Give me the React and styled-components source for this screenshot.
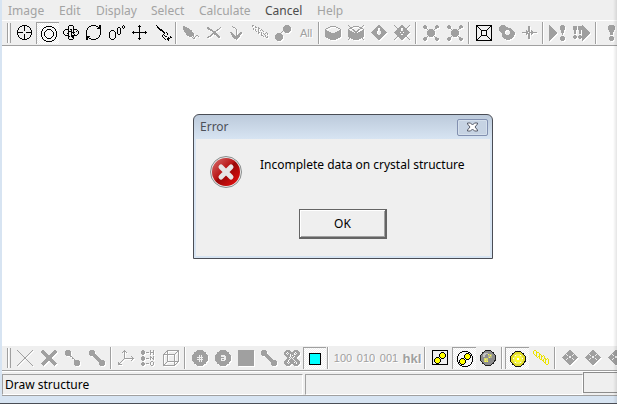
import React, { useState } from "react";
import styled, { createGlobalStyle, css } from "styled-components";

const GlobalStyle = createGlobalStyle`
  body {
    margin: 0;
    background-color: #d7e4f2;
    font-family: "Noto Sans", "Open Sans", sans-serif;
  }
`;

const menus = [
  { label: "Image", width: 51 },
  { label: "Edit", width: 37 },
  { label: "Display", width: 55 },
  { label: "Select", width: 48 },
  { label: "Calculate", width: 66 },
  { label: "Cancel", width: 52, active: true },
  { label: "Help", width: 40 },
];

// one "#" is one pixel of the toolbar glyph
function Pixels({ rows, x = 1, y = 1, fill = "currentColor" }) {
  let d = "";
  rows.forEach((row, j) => {
    for (const run of row.matchAll(/#+/g)) {
      d += `M${x + run.index} ${y + j}h${run[0].length}v1h-${run[0].length}z`;
    }
  });
  return <path d={d} fill={fill} />;
}

const diamond = [
  ".......##.......",
  "......####......",
  ".....######.....",
  "....########....",
  "...##########...",
  "..############..",
  ".##############.",
  "################",
  ".##############.",
  "..############..",
  "...##########...",
  "....########....",
  ".....######.....",
  "......####......",
  ".......##.......",
];

const gem = [
  ".......##.......",
  "......####......",
  ".....######.....",
  "....###..###....",
  "...####..####...",
  "..#####..#####..",
  ".#####....#####.",
  "######....######",
  ".#####....#####.",
  "..#####..#####..",
  "...##########...",
  "....########....",
  ".....######.....",
  "......####......",
  ".......##.......",
];

const bowl = [
  ".....######.....",
  "...##......##...",
  ".##..........##.",
  "#..............#",
  "##............##",
  "####........####",
  "######....######",
  "################",
  "################",
  "################",
  "################",
  ".##############.",
  "...##########...",
  ".....######.....",
];

const bang = ["####", "####", "####", "####", ".##.", ".##.", ".##.", ".##.", "....", ".##.", "####", "####", ".##."];

const ball = ["..###..", ".#####.", "#######", "#######", "#######", ".#####.", "..###.."];
const ballFill = ["..###..", ".#####.", ".#####.", ".#####.", "..###.."];

function YellowPair() {
  return (
    <g>
      <Pixels rows={ball} x={3} y={8} fill="#000" />
      <Pixels rows={ball} x={8} y={3} fill="#000" />
      <Pixels rows={ballFill} x={3} y={9} fill="#ffff00" />
      <Pixels rows={ballFill} x={8} y={4} fill="#ffff00" />
    </g>
  );
}

const icons = {
  target: (
    <Pixels
      rows={[
        ".....#####.....",
        "...##..#..##...",
        "..#....#....#..",
        ".#.....#.....#.",
        ".#.....#.....#.",
        "#......#......#",
        "#.............#",
        "######...######",
        "#.............#",
        "#......#......#",
        ".#.....#.....#.",
        ".#.....#.....#.",
        "..#....#....#..",
        "...##..#..##...",
        ".....#####.....",
      ]}
    />
  ),
  rings: (
    <Pixels
      rows={[
        ".....######.....",
        "...##......##...",
        "..#..........#..",
        ".#....####....#.",
        ".#...#....#...#.",
        "#...#......#...#",
        "#..#........#..#",
        "#..#........#..#",
        "#..#........#..#",
        "#..#........#..#",
        "#...#......#...#",
        ".#...#....#...#.",
        ".#....####....#.",
        "..#..........#..",
        "...##......##...",
        ".....######.....",
      ]}
    />
  ),
  cluster: (
    <Pixels
      rows={[
        "......####......",
        ".....#....#.....",
        ".....#....#.....",
        ".....#....#.....",
        "..####.##.####..",
        ".#...#..#.#...#.",
        "#....####.#..#.#",
        "#....#..####...#",
        "#...##..#.#....#",
        ".#...#..#..#..#.",
        "..####..######..",
        ".....##.###.....",
        ".....#...##.....",
        ".....#....#.....",
        "......####......",
      ]}
    />
  ),
  rotate: (
    <Pixels
      rows={[
        ".....#####...##",
        "...##.....##.##",
        "..#.........###",
        ".#.........####",
        ".#............#",
        "#.............#",
        "#.............#",
        "#.............#",
        "#.............#",
        "#.............#",
        "#............#.",
        "####.........#.",
        "###.........#..",
        "##.##.....##...",
        "##...#####.....",
      ]}
    />
  ),
  zoomAtoms: (
    <Pixels
      rows={[
        "..............#.",
        ".............#.#",
        ".........##..#.#",
        "........#..#..#.",
        "........#..#....",
        "..###...#..#....",
        ".#...#..#..#....",
        "#.....#.#..#....",
        "#.....#.#..#....",
        "#.....#..##.....",
        "#.....#.........",
        "#.....#.........",
        "#.....#.........",
        ".#...#..........",
        "..###...........",
      ]}
    />
  ),
  move: (
    <Pixels
      rows={[
        ".......#.......",
        "......###......",
        ".......#.......",
        ".......#.......",
        ".......#.......",
        ".......#.......",
        ".#.....#.....#.",
        "###############",
        ".#.....#.....#.",
        ".......#.......",
        ".......#.......",
        ".......#.......",
        ".......#.......",
        "......###......",
        ".......#.......",
      ]}
    />
  ),
  probe: (
    <Pixels
      x={2}
      rows={[
        "#...............",
        ".#..............",
        ".##.............",
        "..##............",
        "...###..........",
        "....###.........",
        "......##........",
        ".......##.#.....",
        "........#..#....",
        ".......#...#....",
        "......#.#.......",
        "......#..##...#.",
        ".......#....#.##",
        "........#..###..",
        ".........#.##...",
        "............#...",
      ]}
    />
  ),
  pencil: (
    <Pixels
      y={2}
      rows={[
        "##..............",
        "####............",
        "######..........",
        "#######.........",
        ".########.......",
        ".########.......",
        "..########......",
        "...########.....",
        "...########.....",
        "....#######..##.",
        "......###.#.#..#",
        ".........#.#....",
        "..........##....",
      ]}
    />
  ),
  cross: (
    <Pixels
      x={2}
      y={3}
      rows={[
        "##...........#",
        "###.........#.",
        ".####.....##..",
        "...###...##...",
        ".....####.....",
        "......###.....",
        ".....#####....",
        "....##.####...",
        "...##....###..",
        ".###......###.",
        "##.........##.",
      ]}
    />
  ),
  arrowDown: (
    <Pixels
      x={2}
      y={2}
      rows={[
        "..#.........",
        "...##.......",
        ".....#......",
        "......#.....",
        "......#.....",
        "......#.....",
        "##....#...##",
        ".##...#..###",
        ".###..#.###.",
        "..###.####..",
        "..########..",
        "...######...",
        "....####....",
        "......#.....",
      ]}
    />
  ),
  chain: (
    <Pixels
      rows={[
        "##..............",
        "#..#............",
        "...##.#.........",
        ".#....##........",
        ".#.#..#..#......",
        "...#..#.#.#.....",
        "....#.#....#....",
        "......##.#....#.",
        "......#..#.#.#.#",
        ".........#..#..#",
        ".........##..#..",
        "...........#.#.#",
        "..............##",
      ]}
    />
  ),
  pair: (
    <Pixels
      rows={[
        "..........####..",
        ".........######.",
        "........########",
        "........########",
        "........########",
        "........########",
        ".......#.######.",
        "......#...####..",
        "..####..........",
        ".######.........",
        "########........",
        "########........",
        "########........",
        "########........",
        ".######.........",
        "..####..........",
      ]}
    />
  ),
  bowl: <Pixels rows={bowl} x={0} y={2} />,
  bowlCross: (
    <g>
      <Pixels rows={bowl} x={0} y={2} />
      <path d="M0 1l16 15M16 1L0 16" stroke="currentColor" />
    </g>
  ),
  gem: <Pixels rows={gem} x={0} />,
  gemCross: (
    <g>
      <Pixels rows={gem} x={0} />
      <path d="M0 1l16 15M16 1L0 16" stroke="currentColor" />
    </g>
  ),
  bonds: (
    <Pixels
      rows={[
        ".##..........##.",
        "####........####",
        "####........####",
        ".###........##..",
        "....#.####.#....",
        ".....######.....",
        "....########....",
        "....########....",
        "....########....",
        "....########....",
        ".....######.....",
        "....#.####.#....",
        ".###........##..",
        "####........####",
        "####........####",
        ".##..........##.",
      ]}
    />
  ),
  frame: (
    <Pixels
      rows={[
        "################",
        "##............##",
        "#.#..........#.#",
        "#..#........#..#",
        "#...#......#...#",
        "#....######....#",
        "#....#....#....#",
        "#....#....#....#",
        "#....#....#....#",
        "#....#....#....#",
        "#....######....#",
        "#...#......#...#",
        "#..#........#..#",
        "#.#..........#.#",
        "##............##",
        "################",
      ]}
    />
  ),
  gears: (
    <Pixels
      rows={[
        "..####..........",
        ".######.........",
        "#########.......",
        "############....",
        "#############...",
        "#######...####..",
        ".#####.....####.",
        "..####.....#####",
        "...###.....#####",
        "...####...######",
        "...############.",
        "...############.",
        "....##########..",
        ".....########...",
        ".......####.....",
      ]}
    />
  ),
  split: (
    <Pixels
      y={2}
      rows={[
        "......##.......",
        "......##.......",
        "......##.......",
        "......##.......",
        "....#.##.#.....",
        "....####.##....",
        "######.########",
        "....####.##....",
        "....#.##.#.....",
        "......##.......",
        "......##.......",
        "......##.......",
        "......##.......",
      ]}
    />
  ),
  playMark: (
    <g>
      <path d="M0 1l9 8-9 8z" fill="currentColor" />
      <Pixels
        x={11}
        rows={[
          ".###.",
          "#####",
          "#####",
          "#####",
          "#####",
          ".###.",
          ".###.",
          ".###.",
          "..#..",
          "..#..",
          ".....",
          ".###.",
          "#####",
          "#####",
          "#####",
          ".###.",
        ]}
      />
    </g>
  ),
  markPlay: (
    <g>
      <Pixels rows={bang} x={0} y={2} />
      <Pixels rows={bang} x={5} y={2} />
      <path d="M9 1l8 8-8 8z" fill="currentColor" />
    </g>
  ),
  mark: (
    <Pixels
      x={6}
      rows={[
        ".#####.",
        "#######",
        "#######",
        "#######",
        "#######",
        ".#####.",
        ".#####.",
        "..###..",
        "..###..",
        "..###..",
        ".......",
        "..###..",
        ".#####.",
        ".#####.",
        ".#####.",
        "..###..",
      ]}
    />
  ),
  thinCross: <path d="M1 1l16 16M17 1L1 17" stroke="currentColor" />,
  thickCross: <path d="M2 2l14 14M16 2L2 16" stroke="currentColor" strokeWidth="4" />,
  bondThin: (
    <g fill="currentColor">
      <circle cx="4" cy="4" r="3" />
      <circle cx="13" cy="14" r="3" />
      <path d="M4 4l9 10" stroke="currentColor" strokeDasharray="2 1" />
    </g>
  ),
  bondThick: (
    <g fill="currentColor">
      <circle cx="4" cy="4" r="3" />
      <circle cx="14" cy="14" r="3" />
      <path d="M4 4l10 10" stroke="currentColor" strokeWidth="4" />
    </g>
  ),
  axes: (
    <Pixels
      rows={[
        "......#.........",
        ".....###........",
        "....#.#.#.......",
        "......#.........",
        "......#.........",
        "......#.........",
        "......#......#..",
        "......#.......#.",
        "......##########",
        ".....#........#.",
        "....#........#..",
        "...#............",
        "#.#.............",
        "##..............",
        "####............",
      ]}
    />
  ),
  legend: (
    <Pixels
      x={0}
      rows={[
        "..##......#..#.",
        ".####.....#..#.",
        ".####.###.####.",
        ".####.....#..#.",
        "..##......#..#.",
        "...............",
        "..##......#..#.",
        ".####.....##.#.",
        ".####.###.#.##.",
        ".####.....#..#.",
        "..##...........",
        "...........##..",
        "..##......#..#.",
        ".####.###.#..#.",
        ".####.....#..#.",
        "..##.......##..",
      ]}
    />
  ),
  cell: (
    <g fill="none" stroke="currentColor">
      <path d="M.500 5.500h11v11H.500zM4.500 1.500h11v11h-11zM.500 5.500l4-4M11.500 5.500l4-4M.500 16.500l4-4M11.500 16.500l4-4" />
    </g>
  ),
  discPlus: (
    <g>
      <circle cx="9" cy="9" r="8" fill="currentColor" />
      <path d="M8 6h1v2h1V6h1v2h1v1h-1v1h1v1h-1v2h-1v-2H9v2H8v-2H6v-1h2V9H6V8h2zM9 9v1h1V9z" fill="#efefef" />
    </g>
  ),
  discBox: (
    <g>
      <circle cx="9" cy="9" r="8" fill="currentColor" />
      <path d="M7 6h4v1h1v4h-1v1H7V9h3V8H7zM8 10v1h2v-1z" fill="#efefef" />
    </g>
  ),
  block: <path d="M1 1h16v16H1z" fill="currentColor" />,
  dumbbell: (
    <g fill="currentColor">
      <circle cx="4" cy="4" r="3" />
      <circle cx="14" cy="14" r="3" />
      <path d="M4 4l10 10" stroke="currentColor" strokeWidth="3" />
    </g>
  ),
  mesh: (
    <Pixels
      rows={[
        "..####....####..",
        ".######..######.",
        "###.#######.####",
        "##.#.#####.#.###",
        "###.##.###..####",
        ".#####.#.######.",
        "..####.###.###..",
        "...##.#.#.###...",
        "...###.#.####...",
        "..###.###.####..",
        ".###.#####.####.",
        "####.######.####",
        "###.#.####.#.###",
        "####.#######.###",
        ".######..######.",
        "..####....####..",
      ]}
    />
  ),
  cyanBox: (
    <g>
      <path d="M2 3h12v12H2z" fill="#000" />
      <path d="M3 4h10v10H3z" fill="#00ffff" />
    </g>
  ),
  yellowBox: (
    <g>
      <path d="M1 1h16v15H1zM2 2v13h14V2z" fill="#000" fillRule="evenodd" />
      <YellowPair />
    </g>
  ),
  yellowRing: (
    <g>
      <Pixels
        rows={[
          ".....######.....",
          "...##......##...",
          "..#..........#..",
          ".#............#.",
          ".#............#.",
          "#..............#",
          "#..............#",
          "#..............#",
          "#..............#",
          "#..............#",
          "#..............#",
          ".#............#.",
          ".#............#.",
          "..#..........#..",
          "...##......##...",
          ".....######.....",
        ]}
      />
      <YellowPair />
    </g>
  ),
  greySphere: (
    <g>
      <circle cx="9" cy="9" r="8" fill="#202020" />
      <circle cx="9" cy="9" r="7" fill="#8c8c8c" />
      <path d="M5 4h4v1H7v1H6v2H4V5h1z" fill="#c4c4c4" />
      <circle cx="7" cy="11" r="2.500" fill="#d4d470" />
      <circle cx="11" cy="7" r="2.500" fill="#b4b484" />
      <path d="M6 10h1v1H6zM8 12h1v1H8zM6 12h1v1H6zM11 6h1v1h-1zM9 5h1v1H9zM10 8h1v1h-1z" fill="#ffff40" />
    </g>
  ),
  yellowSphere: (
    <g>
      <circle cx="9" cy="9" r="8" fill="#101010" />
      <circle cx="9" cy="9" r="7" fill="#e0dc28" />
      <circle cx="9" cy="9" r="5" fill="#f0ec60" />
      <circle cx="9" cy="9" r="3" fill="#ffff20" />
      <path
        d="M8 8h2v2H8zM6 5h1v1H6zM11 5h1v1h-1zM6 12h1v1H6zM11 12h1v1h-1zM4 8h1v1H4zM13 8h1v1h-1z"
        fill="#fff"
      />
    </g>
  ),
  yellowChain: (
    <Pixels
      fill="#ece400"
      rows={[
        ".##.............",
        "#..#............",
        "#..###..........",
        "#..#..#.........",
        ".#.#..##........",
        "..##..#.#.#.....",
        "...#.##.##.#....",
        "....#.#.#..#....",
        "......#.#..##.#.",
        ".......##.#.##.#",
        ".........##.#..#",
        "..........#.#..#",
        "...........##..#",
        "............#..#",
        ".............##.",
      ]}
    />
  ),
  petals: (
    <g>
      <Pixels rows={diamond} x={1} />
      <path d="M8 7h2v2H8zM5 5h1v1H5zM12 5h1v1h-1zM6 6h1v1H6zM11 6h1v1h-1zM6 9h1v1H6zM11 9h1v1h-1zM5 10h1v1H5zM12 10h1v1h-1z" fill="#efefef" />
    </g>
  ),
};

const topGroups = [
  {
    cell: 23,
    items: [
      { icon: "target", on: true },
      { icon: "rings", on: true, pressed: true },
      { icon: "cluster", on: true },
      { icon: "rotate", on: true },
      { icon: "zoomAtoms", on: true },
      { icon: "move", on: true },
      { icon: "probe", on: true },
    ],
  },
  {
    cell: 23,
    items: [
      { icon: "pencil" },
      { icon: "cross" },
      { icon: "arrowDown" },
      { icon: "chain" },
      { icon: "pair" },
      { text: "All" },
    ],
  },
  { cell: 23, items: [{ icon: "bowl" }, { icon: "bowlCross" }, { icon: "gem" }, { icon: "gemCross" }] },
  { cell: 24, items: [{ icon: "bonds" }, { icon: "bonds" }] },
  { cell: 23, items: [{ icon: "frame", on: true }, { icon: "gears" }, { icon: "split" }] },
  { cell: 24, items: [{ icon: "playMark" }, { icon: "markPlay" }] },
  { cell: 24, items: [{ icon: "mark" }] },
];

const bottomGroups = [
  {
    cell: 24,
    items: [{ icon: "thinCross" }, { icon: "thickCross" }, { icon: "bondThin" }, { icon: "bondThick" }],
  },
  { cell: 23, items: [{ icon: "axes" }, { icon: "legend" }, { icon: "cell" }] },
  {
    cell: 23,
    items: [
      { icon: "discPlus" },
      { icon: "discBox" },
      { icon: "block" },
      { icon: "dumbbell" },
      { icon: "mesh" },
      { icon: "cyanBox", on: true, pressed: true },
    ],
  },
  { cell: 23, items: [{ text: "100" }, { text: "010" }, { text: "001" }, { text: "hkl", bold: true }] },
  {
    cell: 24,
    items: [
      { icon: "yellowBox", on: true },
      { icon: "yellowRing", on: true, pressed: true },
      { icon: "greySphere", on: true },
    ],
  },
  {
    cell: 24,
    items: [
      { icon: "yellowSphere", on: true, pressed: true },
      { icon: "yellowChain", on: true },
    ],
  },
  { cell: 23, items: [{ icon: "petals" }, { icon: "petals" }, { icon: "petals" }] },
];

function Bar({ groups, label, top }) {
  return (
    <Toolbar role="toolbar" aria-label={label} $top={top}>
      <Grip />
      {groups.map((group, i) => (
        <React.Fragment key={i}>
          {i > 0 && <Separator />}
          {group.items.map((item, j) => (
            <Tool
              key={j}
              type="button"
              aria-label={item.text || item.icon}
              disabled={!item.on}
              $cell={group.cell}
              $text={item.text}
              $pressed={item.pressed}
              $bold={item.bold}
            >
              {item.text || (
                <Icon viewBox="0 0 18 18" $off={!item.on}>
                  {icons[item.icon]}
                </Icon>
              )}
            </Tool>
          ))}
        </React.Fragment>
      ))}
    </Toolbar>
  );
}

function ErrorDialog({ onClose }) {
  return (
    <Dialog role="alertdialog" aria-labelledby="dialog-title" aria-describedby="dialog-text">
      <TitleBar>
        <Title id="dialog-title">Error</Title>
        <CloseButton type="button" aria-label="Close" onClick={onClose}>
          <svg width="13" height="10" viewBox="0 0 13 10">
            <path
              d="M1.500 1h3l2 2 2-2h3v1L9 5l2.500 3v1h-3l-2-2-2 2h-3V8L4 5 1.500 2z"
              fill="#fff"
              stroke="#555a68"
            />
          </svg>
        </CloseButton>
      </TitleBar>
      <DialogBody>
        <Message>
          <ErrorIcon viewBox="0 0 34 34">
            <defs>
              <linearGradient id="red" x1="0" y1="0" x2="1" y2="1">
                <stop offset="0" stopColor="#d87070" />
                <stop offset="0.450" stopColor="#b81414" />
                <stop offset="0.500" stopColor="#980808" />
                <stop offset="1" stopColor="#f01010" />
              </linearGradient>
            </defs>
            <circle cx="17" cy="17" r="15.500" fill="#e8e8e8" stroke="#8a8e8e" />
            <circle cx="17" cy="17" r="14" fill="url(#red)" />
            <path d="M12 12l10 10M22 12L12 22" stroke="#e6e6e6" strokeWidth="5" strokeLinecap="round" />
          </ErrorIcon>
          <p id="dialog-text">Incomplete data on crystal structure</p>
        </Message>
        <OkButton type="button" onClick={onClose}>
          OK
        </OkButton>
      </DialogBody>
    </Dialog>
  );
}

function App() {
  const [open, setOpen] = useState(true);

  return (
    <Window>
      <GlobalStyle />
      <MenuBar>
        {menus.map((menu) => (
          <MenuItem key={menu.label} type="button" disabled={!menu.active} $width={menu.width}>
            {menu.label}
          </MenuItem>
        ))}
      </MenuBar>
      <Bar groups={topGroups} label="Tools" top />
      <Canvas>{open && <ErrorDialog onClose={() => setOpen(false)} />}</Canvas>
      <Bar groups={bottomGroups} label="Drawing" />
      <StatusBar>
        <Pane $grow={302}>Draw structure</Pane>
        <Pane $grow={279} />
        <Pane $grow={32} $raised />
      </StatusBar>
      <EdgeShade />
    </Window>
  );
}

const Window = styled.div`
  position: relative;
  display: flex;
  flex-direction: column;
  min-height: 100vh;
  box-sizing: border-box;
  padding: 0 0 7px 2px;
  border-bottom: 1px solid #4a4d55;
  background-color: #d7e4f2;
  overflow: hidden;
`;

const MenuBar = styled.nav`
  display: flex;
  height: 20px;
  background-color: #efefef;
`;

const MenuItem = styled.button`
  flex: none;
  width: ${(props) => props.$width}px;
  padding: 1px 0 0 6px;
  border: none;
  background: none;
  font-family: inherit;
  font-size: 12px;
  line-height: 19px;
  text-align: left;
  color: #4c4c4c;

  &:disabled {
    color: #a3a3a3;
  }
`;

const Toolbar = styled.div`
  display: flex;
  align-items: center;
  height: 24px;
  border-top: ${(props) => (props.$top ? "1px solid #fff" : "none")};
  border-bottom: 1px solid #a0a0a0;
  background-color: #efefef;
  overflow: hidden;
`;

const Grip = styled.span`
  flex: none;
  box-sizing: border-box;
  width: 4px;
  height: 20px;
  margin: 0 2px 0 5px;
  border: solid #a0a0a0;
  border-width: 0 1px;
  background: linear-gradient(90deg, #fff 1px, #efefef 1px);
`;

const Separator = styled.span`
  flex: none;
  width: 1px;
  height: 22px;
  margin: 0 2px 0 1px;
  border-right: 1px solid #fff;
  background-color: #a0a0a0;
`;

const Tool = styled.button`
  flex: none;
  display: flex;
  align-items: center;
  justify-content: ${(props) => (props.$text ? "center" : "flex-start")};
  box-sizing: border-box;
  width: ${(props) => props.$cell}px;
  height: 22px;
  padding: 0 0 0 ${(props) => (props.$text ? 1 : 3)}px;
  border: none;
  background: none;
  color: #000;
  font-family: "Liberation Sans", Arial, sans-serif;
  font-size: ${(props) => (props.$bold ? 13 : 11)}px;
  font-weight: ${(props) => (props.$bold ? "bold" : "normal")};

  &:disabled {
    color: #a0a0a0;
    text-shadow: 1px 1px 0 #fff;
  }

  ${(props) =>
    props.$pressed &&
    css`
      padding-top: 1px;
      border: solid #a0a0a0;
      border-width: 1px 0 0 1px;
      background: repeating-conic-gradient(#efefef 0 25%, #fff 0 50%) 0 0 / 2px 2px;
    `}
`;

const Icon = styled.svg`
  flex: none;
  width: 18px;
  height: 18px;
  shape-rendering: crispEdges;
  filter: ${(props) => (props.$off ? "drop-shadow(1px 1px 0 #fff)" : "none")};
`;

const Canvas = styled.main`
  position: relative;
  flex: 1;
  background-color: #fff;
`;

const Dialog = styled.section`
  position: absolute;
  top: 68px;
  left: 191px;
  width: 300px;
  box-sizing: border-box;
  padding: 0 2px 2px;
  border: 1px solid #4a4d55;
  border-radius: 6px 6px 0 0;
  background: linear-gradient(#bccadb, #d7e4f2 24px);
`;

const TitleBar = styled.header`
  display: flex;
  justify-content: space-between;
  align-items: center;
  height: 24px;
  padding: 0 2px 0 4px;
`;

const Title = styled.h1`
  margin: 0;
  font-size: 12px;
  font-weight: normal;
  line-height: 26px;
  color: #4c5058;
`;

const CloseButton = styled.button`
  display: flex;
  align-items: center;
  justify-content: center;
  box-sizing: border-box;
  width: 31px;
  height: 17px;
  padding: 0;
  border: 1px solid #8290b0;
  border-radius: 2px;
  background-color: #c6d3e3;
  box-shadow: inset 0 0 0 1px #d5e0ec;
`;

const DialogBody = styled.div`
  display: flex;
  flex-direction: column;
  align-items: center;
  padding: 16px 17px 17px 13px;
  background-color: #efefef;
`;

const Message = styled.div`
  align-self: stretch;
  display: flex;
  gap: 17px;

  p {
    margin: 0;
    font-size: 12px;
    line-height: 20px;
    white-space: nowrap;
    color: #000;
  }
`;

const ErrorIcon = styled.svg`
  flex: none;
  width: 34px;
  height: 34px;
`;

const OkButton = styled.button`
  width: 88px;
  height: 30px;
  margin: 20px 0 0 4px;
  padding: 0;
  border: solid #646464;
  border-width: 1px 2px 2px 1px;
  background-color: #efefef;
  box-shadow: inset 1px 1px 0 #fff, inset -1px -1px 0 #a0a0a0;
  font-family: inherit;
  font-size: 12px;
  color: #000;
`;

const StatusBar = styled.footer`
  display: flex;
  gap: 2px;
  height: 21px;
  padding-top: 2px;
  border-top: 1px solid #fff;
  border-bottom: 1px solid #a0a0a0;
  background-color: #efefef;
`;

const Pane = styled.div`
  flex: ${(props) => props.$grow} 1 0;
  box-sizing: border-box;
  padding-left: 2px;
  border: 1px solid;
  border-color: #a0a0a0 #fff #fff #a0a0a0;
  font-size: 12px;
  line-height: 20px;
  white-space: nowrap;
  color: #000;

  ${(props) =>
    props.$raised &&
    css`
      margin: -2px 0 2px -2px;
      border-color: #8c8c8c;
      border-right: none;
    `}
`;

const EdgeShade = styled.span`
  position: absolute;
  top: 0;
  right: 0;
  bottom: 0;
  width: 4px;
  background: linear-gradient(90deg, rgba(0, 0, 0, 0), rgba(0, 0, 0, 0.1));
  pointer-events: none;
`;

export default App;
